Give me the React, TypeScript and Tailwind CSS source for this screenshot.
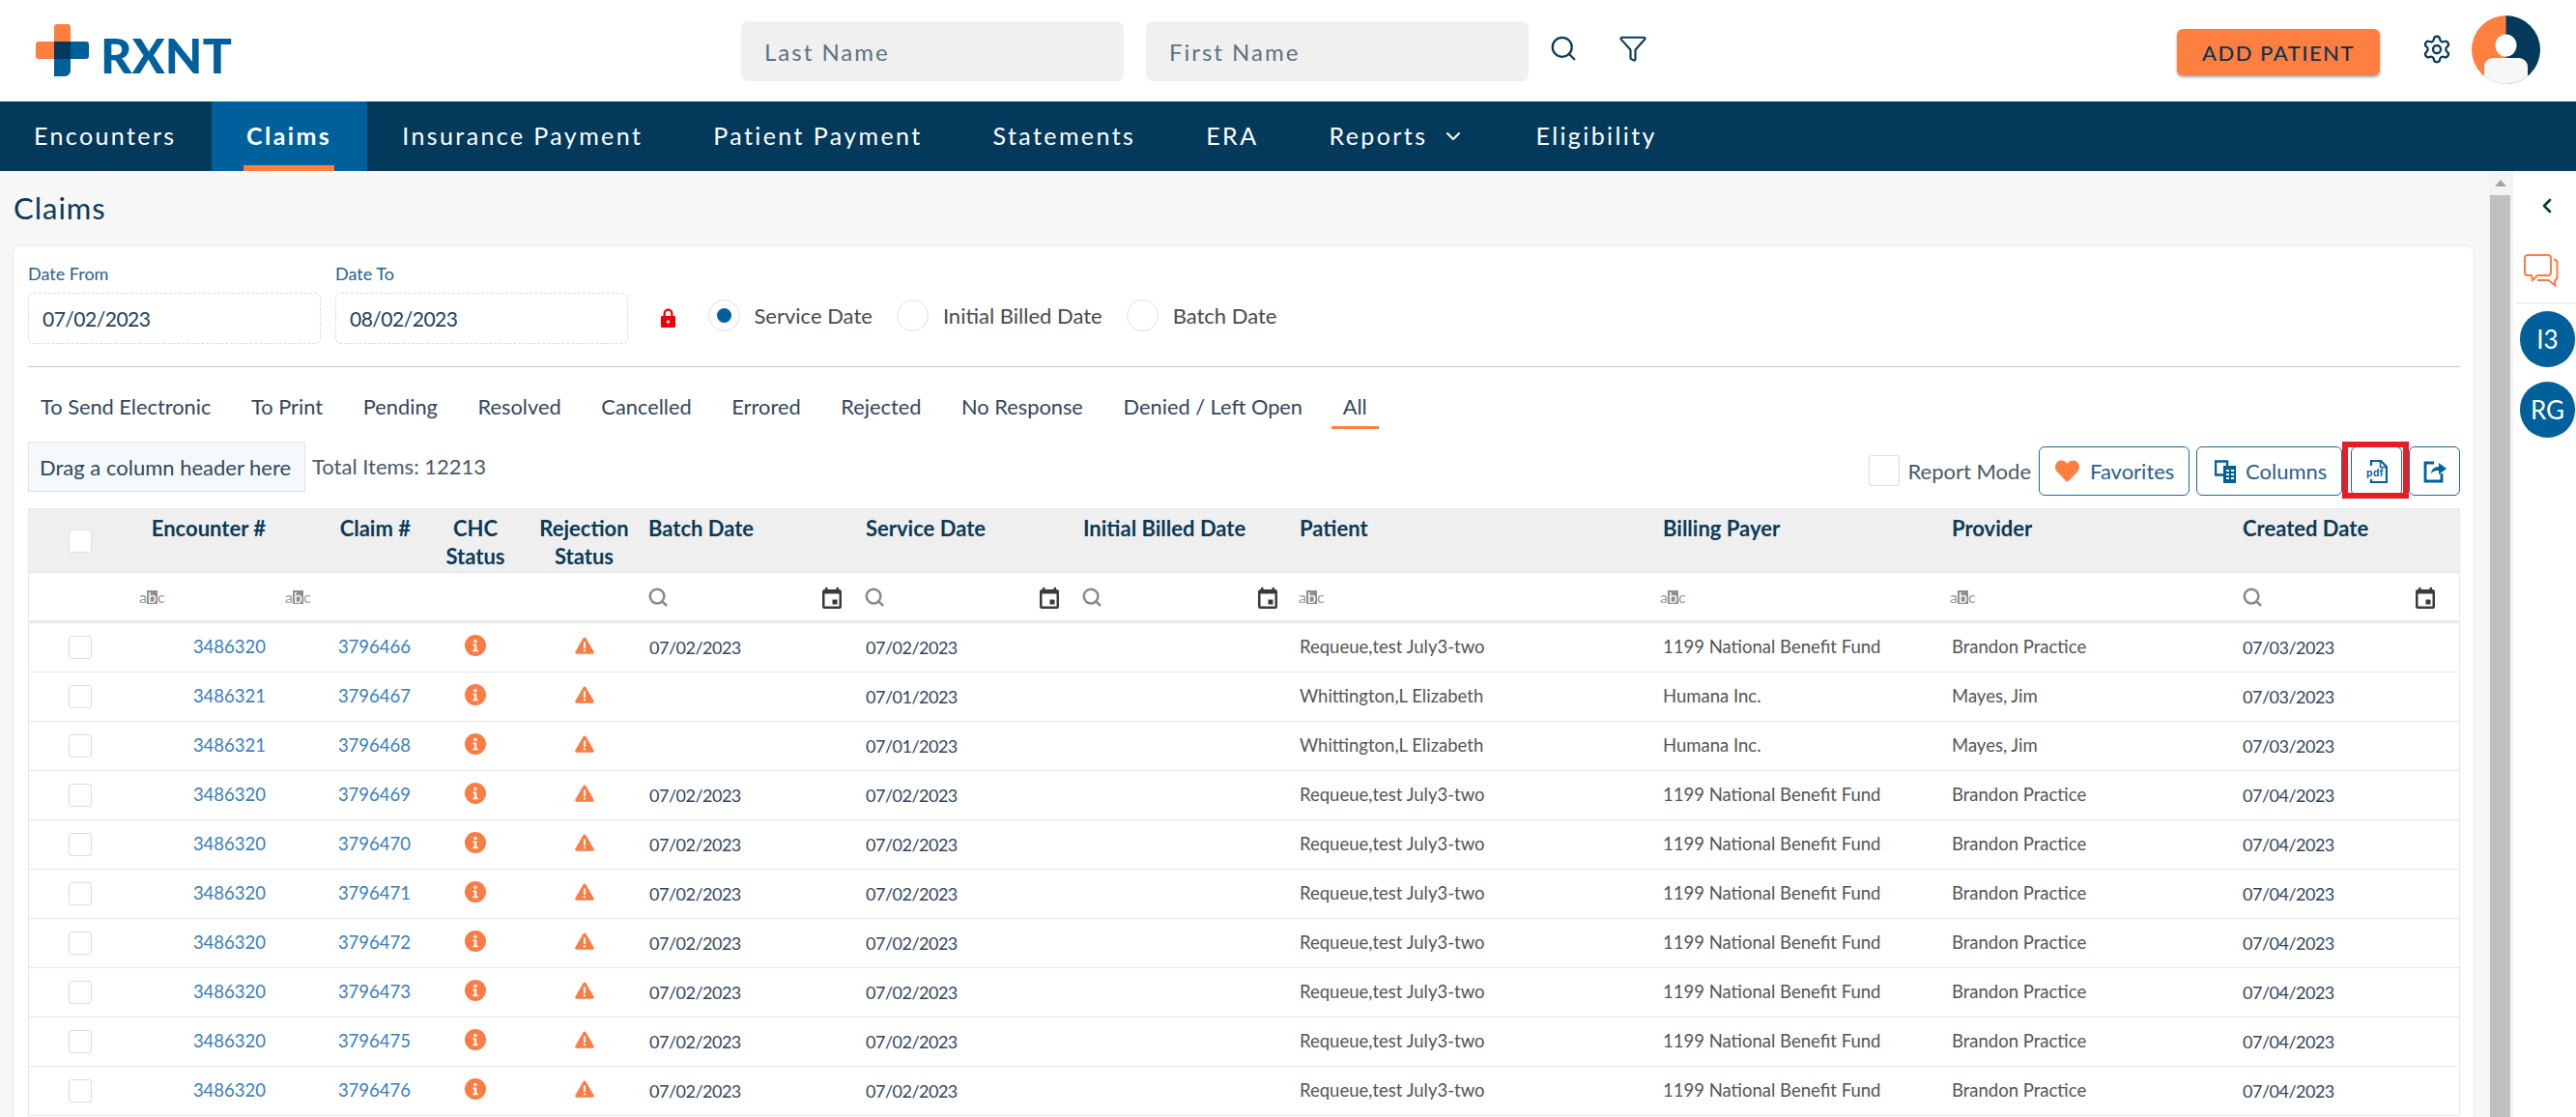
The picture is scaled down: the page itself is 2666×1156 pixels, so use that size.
import React from "react";
import { Search, Filter, Settings, ChevronDown, ChevronLeft } from "lucide-react";
import { FaHeart } from "react-icons/fa";

const GRID = "grid grid-cols-[108px_149px_150px_110px_115px_224px_225px_226px_374px_300px_301px_234px]";

type Row = { enc: string; claim: string; batch: string; service: string; patient: string; payer: string; provider: string; created: string };

const mk = (claim: string, created = "07/04/2023"): Row => ({
  enc: "3486320", claim, batch: "07/02/2023", service: "07/02/2023",
  patient: "Requeue,test July3-two",
  payer: "1199 National Benefit Fund", provider: "Brandon Practice", created,
});
const wh = (claim: string): Row => ({
  enc: "3486321", claim, batch: "", service: "07/01/2023", patient: "Whittington,L Elizabeth",
  payer: "Humana Inc.", provider: "Mayes, Jim", created: "07/03/2023",
});
const rows: Row[] = [
  mk("3796466", "07/03/2023"), wh("3796467"), wh("3796468"), mk("3796469"), mk("3796470"),
  mk("3796471"), mk("3796472"), mk("3796473"), mk("3796475"), mk("3796476"),
];

const navItems = ["Encounters", "Claims", "Insurance Payment", "Patient Payment", "Statements", "ERA", "Reports", "Eligibility"];
const tabs = ["To Send Electronic", "To Print", "Pending", "Resolved", "Cancelled", "Errored", "Rejected", "No Response", "Denied / Left Open", "All"];

function Abc() {
  return (
    <span className="inline-flex items-center text-[16px] leading-[14px] text-[#9a9a9a]">
      a<span className="bg-[#8f8f8f] text-white px-[1px]">b</span>c
    </span>
  );
}

function Calendar() {
  return (
    <svg width="20" height="24" viewBox="0 0 20 24" aria-hidden="true">
      <path d="M3 2h2.500v2h9V2H17v2h.5A2.500 2.500 0 0 1 20 6.500v15a2.500 2.500 0 0 1-2.500 2.500h-15A2.500 2.500 0 0 1 0 21.500v-15A2.500 2.500 0 0 1 2.500 4H3z" fill="#3a3a3a" />
      <rect x="2.500" y="8.500" width="15" height="13" fill="#fff" />
      <rect x="10.500" y="14.500" width="5" height="5" fill="#3a3a3a" />
    </svg>
  );
}

function Mag() {
  return <Search className="w-[22px] h-[22px] text-[#8a8a8a]" strokeWidth={2.7} />;
}

function InfoDot() {
  return (
    <svg width="22" height="22" viewBox="0 0 22 22" aria-hidden="true">
      <circle cx="11" cy="11" r="11" fill="#f97d45" />
      <circle cx="11" cy="6.500" r="1.700" fill="#fff" />
      <path d="M8.500 9.500h3.700v6h1.500v1.800H8.500v-1.800H10v-4.200H8.500z" fill="#fff" />
    </svg>
  );
}

function Warn() {
  return (
    <svg width="20" height="18" viewBox="0 0 20 18" aria-hidden="true">
      <path d="M10 0.500c.6 0 1.100.3 1.400.8l8.200 14.300c.6 1-.1 2.200-1.400 2.200H1.800c-1.300 0-2-1.200-1.400-2.200L8.600 1.300c.3-.5.8-.8 1.400-.8z" fill="#f97d45" />
      <rect x="9" y="5.500" width="2" height="6.500" fill="#fff" />
      <rect x="9" y="13.300" width="2" height="2" fill="#fff" />
    </svg>
  );
}

function Radio({ on, label, cls }: { on?: boolean; label: string; cls: string }) {
  return (
    <div className={"flex items-center gap-[15px] " + cls}>
      <span className="w-[33px] h-[33px] rounded-full border border-[#dfdfdf] bg-white flex items-center justify-center">
        {on && <span className="w-[15px] h-[15px] rounded-full bg-[#00609b]" />}
      </span>
      <span className="text-[22px] text-[#4a4a4a] leading-[28px]">{label}</span>
    </div>
  );
}

function DateField({ label, value, w }: { label: string; value: string; w: string }) {
  return (
    <div className={w}>
      <div className="text-[18px] leading-[24px] text-[#2b5f8c] mb-[8px]">{label}</div>
      <div className="h-[53px] border border-dashed border-[#dcdcdc] rounded-[6px] flex items-center pl-[14px] text-[21px] tracking-[-0.5px] text-[#1c3f5a]">
        {value}
      </div>
    </div>
  );
}

export default function App() {
  return (
    <div className="w-[2666px] h-[1156px] overflow-hidden bg-white flex flex-col [font-family:Lato,sans-serif]">
      {/* top bar */}
      <header className="h-[105px] shrink-0 flex items-center bg-white">
        <div className="w-[767px] shrink-0 pl-[37px] flex items-center gap-[12px]">
          <svg width="55" height="54" viewBox="0 0 55 54" aria-hidden="true" className="-mt-[2px]">
            <path d="M19 3a3 3 0 0 1 3-3h11a3 3 0 0 1 3 3v33H3a3 3 0 0 1-3-3V21a3 3 0 0 1 3-3h16z" fill="#ff7f41" />
            <path d="M19 18h33a3 3 0 0 1 3 3v12a3 3 0 0 1-3 3H36v12a6 6 0 0 1-6 6h-11z" fill="#00609b" />
            <rect x="19" y="18" width="17" height="18" fill="#033a5c" />
          </svg>
          <span className="text-[50px] leading-none font-black text-[#00609b] tracking-[0.2px] mt-[9px]">RXNT</span>
        </div>
        <div className="w-[396px] h-[62px] rounded-[7px] bg-[#f0f0f0] flex items-center pl-[24px] pt-[2px] text-[24px] tracking-[2px] text-[#5d7282]">Last Name</div>
        <div className="w-[396px] h-[62px] ml-[23px] rounded-[7px] bg-[#f0f0f0] flex items-center pl-[24px] pt-[2px] text-[24px] tracking-[2px] text-[#5d7282]">First Name</div>
        <Search className="ml-[21px] w-[30px] h-[30px] text-[#0b3a57] -mt-[6px]" strokeWidth={1.8} />
        <Filter className="ml-[42px] w-[30px] h-[30px] text-[#0b3a57] -mt-[6px]" strokeWidth={1.7} />
        <button className="ml-[548px] w-[210px] h-[48px] rounded-[6px] bg-[#ff7f41] shadow-[0_2px_3px_rgba(0,0,0,0.35)] text-[22px] tracking-[1.5px] text-[#0f3350] font-medium mt-[3px]">ADD PATIENT</button>
        <Settings className="ml-[43px] w-[32px] h-[32px] text-[#0b3a57] -mt-[4px]" strokeWidth={1.7} />
        <svg width="71" height="71" viewBox="0 0 71 71" className="ml-[20px] -mt-[2px]" aria-hidden="true">
          <defs>
            <clipPath id="av"><circle cx="35.500" cy="35.500" r="35.500" /></clipPath>
          </defs>
          <g clipPath="url(#av)">
            <rect width="36" height="71" fill="#ff7f41" />
            <rect x="35.500" width="36" height="71" fill="#033a5c" />
            <ellipse cx="35.500" cy="31" rx="11" ry="11.500" fill="#fff" />
            <rect x="13" y="44" width="45" height="30" rx="9" fill="#f7f7f7" />
          </g>
        </svg>
      </header>

      {/* nav */}
      <nav className="h-[72px] shrink-0 bg-[#033a5c] flex">
        {navItems.map((n, i) => {
          const active = n === "Claims";
          return (
            <div
              key={n}
              className={
                "relative flex items-center text-[25px] tracking-[2.400px] text-white " +
                (active ? "bg-[#00609b] font-bold " : "") +
                (i === 0 ? "pl-[35px] pr-[36px]" : "px-[36.500px]")
              }
            >
              {n}
              {n === "Reports" && <ChevronDown className="ml-[15px] w-[24px] h-[24px]" strokeWidth={2} />}
              {active && <span className="absolute left-[33px] right-[34px] bottom-0 h-[6px] bg-[#ff7f41]" />}
            </div>
          );
        })}
      </nav>

      {/* body */}
      <div className="flex-1 min-h-0 flex">
        <main className="w-[2576px] shrink-0 bg-[#f7f7f7] pl-[14px] pr-[16px] overflow-hidden">
          <h1 className="h-[78px] flex items-center pb-[1px] text-[31px] font-normal text-[#0b3a57] tracking-[1px]">Claims</h1>
          <section className="bg-white rounded-[8px] shadow-[0_0_3px_rgba(0,0,0,0.10)] pl-[15px] pr-[14px] pt-[16px] h-[1000px]">
            {/* dates */}
            <div className="flex items-end gap-[15px] pb-[23px] border-b-[1.500px] border-[#c9c9c9]">
              <DateField label="Date From" value="07/02/2023" w="w-[303px]" />
              <DateField label="Date To" value="08/02/2023" w="w-[303px]" />
              <svg width="15" height="20" viewBox="0 0 15 20" className="ml-[19px] mb-[17px]" aria-hidden="true">
                <path d="M2.500 8V5.500a5 5 0 0 1 10 0V8H14a1 1 0 0 1 1 1v10a1 1 0 0 1-1 1H1a1 1 0 0 1-1-1V9a1 1 0 0 1 1-1zM4.800 8h5.400V5.500a2.700 2.700 0 0 0-5.400 0z" fill="#f00000" fillRule="evenodd" />
                <circle cx="7.500" cy="14" r="1.700" fill="#fff" />
              </svg>
              <div className="flex items-center ml-[18.500px] mb-[13px]">
                <Radio on label="Service Date" cls="" />
                <Radio label="Initial Billed Date" cls="ml-[25px]" />
                <Radio label="Batch Date" cls="ml-[25px]" />
              </div>
            </div>

            {/* tabs */}
            <div className="flex items-center h-[52px] mt-[15px] pl-[13px] gap-[41.700px] text-[21.800px] text-[#33475b]">
              {tabs.map((t) => (
                <div key={t} className="relative">
                  {t}
                  {t === "All" && <span className="absolute -left-[12px] -right-[12px] -bottom-[7px] h-[3px] bg-[#ff7f41]" />}
                </div>
              ))}
            </div>

            {/* toolbar */}
            <div className="flex h-[69px] mt-[10px]">
              <div className="w-[287px] h-[52px] bg-[#f4f9fd] border border-[#dde3e8] flex items-center pl-[11px] text-[22px] text-[#33475b]">Drag a column header here</div>
              <div className="ml-[7px] h-[50px] flex items-center text-[22px] text-[#4a5a66]">Total Items: 12213</div>
              <div className="ml-auto flex items-start pt-[5px]">
                <span className="w-[32px] h-[32px] mt-[9px] rounded-[3px] border border-[#dcdcdc] bg-white" />
                <span className="ml-[8px] mt-[12px] text-[22px] leading-[28px] text-[#4a5a66]">Report Mode</span>
                <button className="ml-[8px] w-[156px] h-[51px] rounded-[6px] border border-[#1d6a96] flex items-center pl-[16px] gap-[11px] text-[22px] text-[#2b5f8c]">
                  <FaHeart className="w-[25px] h-[25px] text-[#ff7f41]" />
                  Favorites
                </button>
                <button className="ml-[7px] w-[151px] h-[51px] rounded-[6px] border border-[#1d6a96] flex items-center pl-[18px] gap-[10px] text-[22px] text-[#2b5f8c]">
                  <svg width="22" height="24" viewBox="0 0 22 24" aria-hidden="true">
                    <path d="M1 1.500h12v14H1z" fill="none" stroke="#00609b" strokeWidth="2.500" />
                    <path d="M9 6h13v18H9z" fill="#00609b" />
                    <path d="M12 10h3v2h-3zM12 14h3v2h-3zM12 18h3v2h-3zM17 10h3v2h-3zM17 14h3v2h-3zM17 18h3v2h-3z" fill="#fff" />
                  </svg>
                  Columns
                </button>
                <button className="relative ml-[9px] w-[53px] h-[51px] rounded-[6px] border border-[#1d6a96] flex items-center justify-center">
                  <svg width="22" height="24" viewBox="0 0 22 24" aria-hidden="true">
                    <path d="M5 6V1h10l6 6v16H5v-3" fill="none" stroke="#00609b" strokeWidth="2.200" />
                    <path d="M14.500 1.500V7.500H21" fill="none" stroke="#00609b" strokeWidth="1.500" />
                    <text x="0" y="17" fontSize="10.500" fontWeight="700" fill="#00609b" fontFamily="Liberation Sans, sans-serif" letterSpacing="0.5">pdf</text>
                  </svg>
                  <span className="absolute -left-[10px] -right-[8px] -top-[6px] -bottom-[4px] border-[6px] border-[#e41e26]" />
                </button>
                <button className="ml-[7px] w-[53px] h-[51px] rounded-[6px] border border-[#1d6a96] flex items-center justify-center">
                  <svg width="24" height="24" viewBox="0 0 24 24" aria-hidden="true">
                    <path d="M11 3H2v19h17v-8" fill="none" stroke="#00609b" strokeWidth="2.800" />
                    <path d="M8 14c.5-4 3-7 8-7V3l8 6-8 6v-4c-3 0-6 .5-8 3z" fill="#00609b" />
                  </svg>
                </button>
              </div>
            </div>

            {/* table */}
            <div className="border-x border-[#e6e6e6]">
              <div className={GRID + " h-[67px] bg-[#efefef] border-y border-[#e6e6e6] text-[22px] leading-[29px] font-bold text-[#0b3a57]"}>
                <div className="pl-[41px] pt-[21px]"><span className="block w-[24px] h-[24px] rounded-[3px] bg-white border border-[#e0e0e0]" /></div>
                <div className="text-right pr-[12px] pt-[5px]">Encounter #</div>
                <div className="text-right pr-[12px] pt-[5px]">Claim #</div>
                <div className="text-center pt-[5px]">CHC<br />Status</div>
                <div className="text-center pt-[5px]">Rejection<br />Status</div>
                <div className="pl-[9px] pt-[5px]">Batch Date</div>
                <div className="pl-[10px] pt-[5px]">Service Date</div>
                <div className="pl-[10px] pt-[5px]">Initial Billed Date</div>
                <div className="pl-[8px] pt-[5px]">Patient</div>
                <div className="pl-[10px] pt-[5px]">Billing Payer</div>
                <div className="pl-[9px] pt-[5px]">Provider</div>
                <div className="pl-[9px] pt-[5px]">Created Date</div>
              </div>

              <div className={GRID + " h-[52px] border-b-[3px] border-[#e8e8e8] items-center"}>
                <div />
                <div className="pl-[6px]"><Abc /></div>
                <div className="pl-[8px]"><Abc /></div>
                <div />
                <div />
                {[0, 1, 2].map((k) => (
                  <div key={k} className="flex items-center justify-between pl-[8px] pr-[15px]"><Mag /><Calendar /></div>
                ))}
                <div className="pl-[7px]"><Abc /></div>
                <div className="pl-[7px]"><Abc /></div>
                <div className="pl-[7px]"><Abc /></div>
                <div className="flex items-center justify-between pl-[8px] pr-[26px]"><Mag /><Calendar /></div>
              </div>

              {rows.map((r) => (
                <div key={r.claim} className={GRID + " h-[51px] border-b border-[#e6e6e6] items-center text-[18.500px] text-[#33475b]"}>
                  <div className="pl-[41px]"><span className="block w-[24px] h-[24px] rounded-[3px] border border-[#dcdcdc] bg-white" /></div>
                  <div className="text-right pr-[12px] text-[#3a80b8]">{r.enc}</div>
                  <div className="text-right pr-[12px] text-[#3a80b8]">{r.claim}</div>
                  <div className="flex justify-center -mt-[4px]"><InfoDot /></div>
                  <div className="flex justify-center -mt-[4px]"><Warn /></div>
                  <div className="pl-[10px] text-[18px] tracking-[-0.5px]">{r.batch}</div>
                  <div className="pl-[10px] text-[18px] tracking-[-0.5px]">{r.service}</div>
                  <div />
                  <div className="pl-[8px] text-[#555]">{r.patient}</div>
                  <div className="pl-[10px] text-[#555]">{r.payer}</div>
                  <div className="pl-[9px] text-[#555]">{r.provider}</div>
                  <div className="pl-[9px] text-[18px] tracking-[-0.5px]">{r.created}</div>
                </div>
              ))}
            </div>
          </section>
        </main>

        {/* scrollbar */}
        <div className="w-[25px] shrink-0 bg-[#f4f4f4] flex flex-col pl-[1px] pr-[3px]">
          <div className="h-[25px] flex items-center justify-center">
            <span className="w-0 h-0 border-x-[6px] border-x-transparent border-b-[7px] border-b-[#a6a6a6]" />
          </div>
          <div className="flex-1 bg-[#c0c0c0]" />
        </div>

        {/* side panel */}
        <aside className="flex-1 bg-white flex flex-col">
          <div className="h-[72px] flex items-center justify-center pl-[4px] -mb-[1px]">
            <ChevronLeft className="w-[24px] h-[24px] text-[#0b3a30]" strokeWidth={2.6} />
          </div>
          <div className="h-[65px] flex items-start pl-[11px]">
            <svg width="36" height="34" viewBox="0 0 36 34" className="mt-[15px]" aria-hidden="true">
              <path d="M4 1h21a3 3 0 0 1 3 3v15a3 3 0 0 1-3 3H14l-5 5-1-5H4a3 3 0 0 1-3-3V4a3 3 0 0 1 3-3z" fill="none" stroke="#f97d45" strokeWidth="2" />
              <path d="M31 5.500c2 .2 3.500 1 3.500 3V24a3 3 0 0 1-3 3H32l.5 5.500-7-5.500H14" fill="none" stroke="#f97d45" strokeWidth="2" />
            </svg>
          </div>
          <div className="ml-[3px] border-t border-[#e2e2e2] pt-[8px] pl-[4px] flex flex-col gap-[15px]">
            <div className="w-[57px] h-[58px] rounded-full bg-[#00609b] text-white text-[26px] flex items-center justify-center">I3</div>
            <div className="w-[57px] h-[58px] rounded-full bg-[#00609b] text-white text-[26px] flex items-center justify-center">RG</div>
          </div>
        </aside>
      </div>
    </div>
  );
}
